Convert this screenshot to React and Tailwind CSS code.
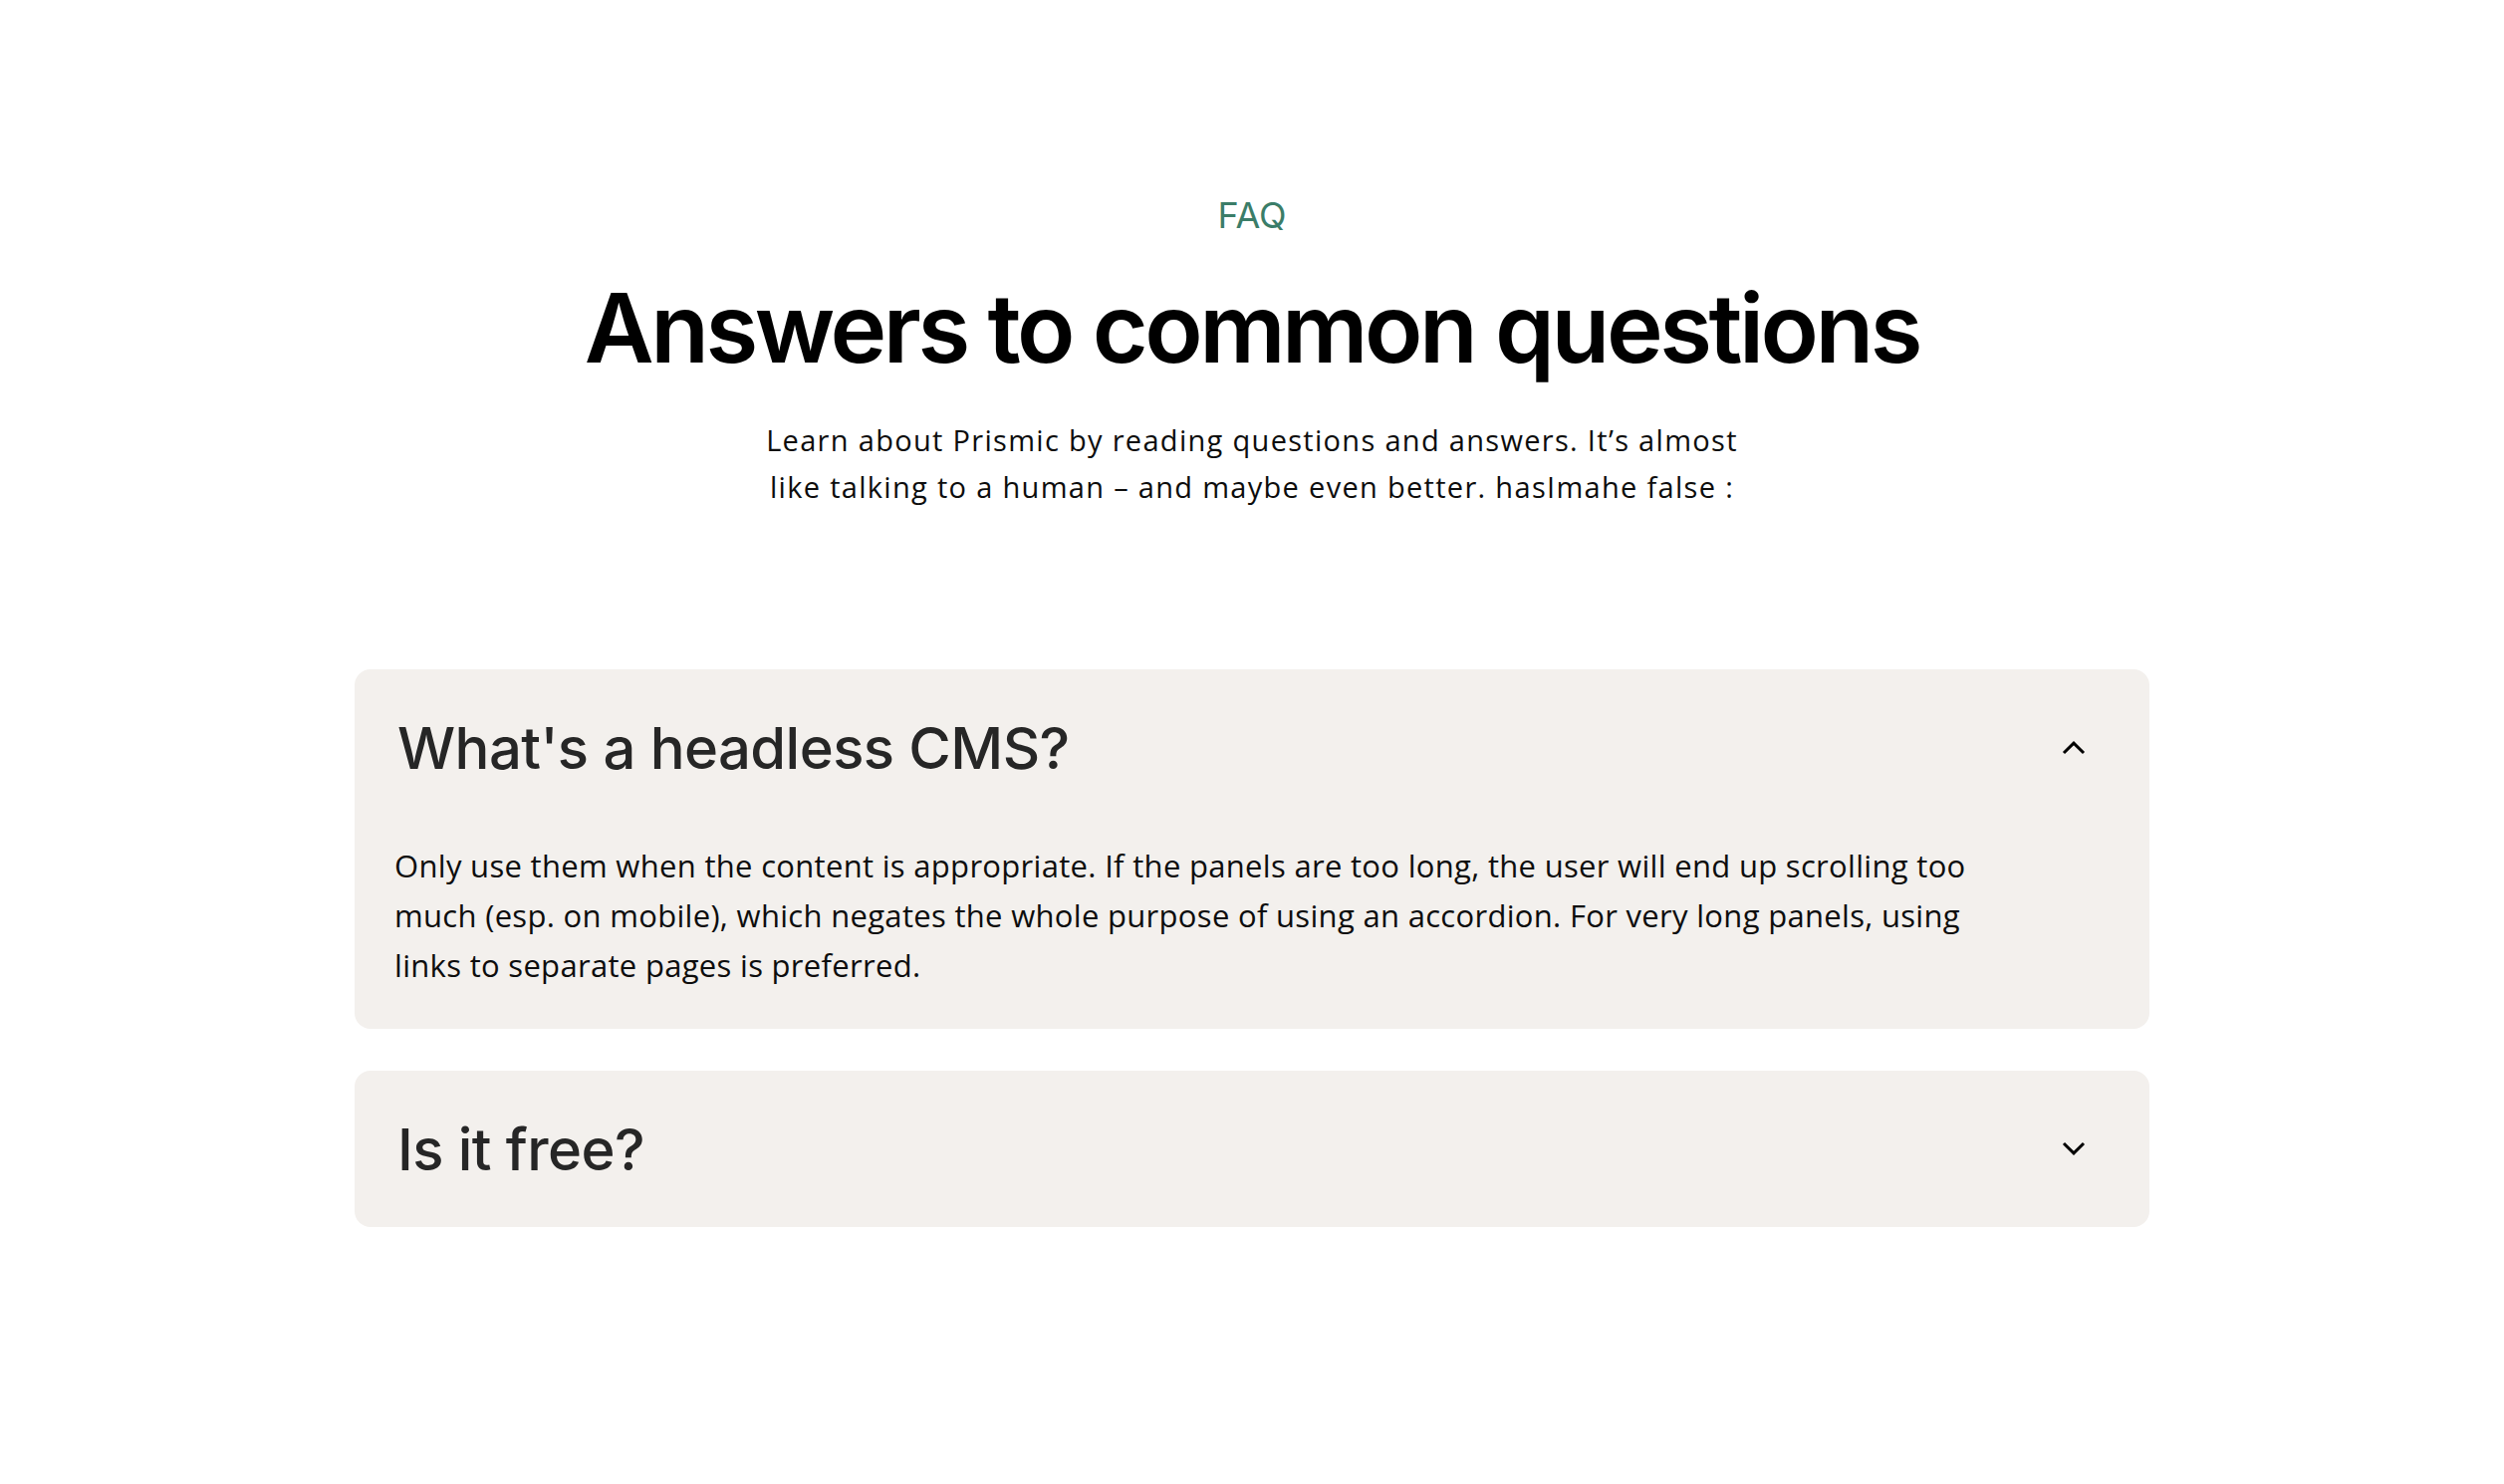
import React, { useState } from "react";

const items = [
  {
    q: "What's a headless CMS?",
    a: "Only use them when the content is appropriate. If the panels are too long, the user will end up scrolling too much (esp. on mobile), which negates the whole purpose of using an accordion. For very long panels, using links to separate pages is preferred.",
  },
  { q: "Is it free?", a: "Yes, you can get started with Prismic for free." },
];

function Chevron({ up }) {
  return (
    <svg width="24" height="15" viewBox="0 0 24 15" fill="none" stroke="#000" strokeWidth="3" strokeLinecap="butt" strokeLinejoin="miter" className={up ? "" : "rotate-180"}>
      <path d="M2 13 L12 3.2 L22 13" />
    </svg>
  );
}

export default function App() {
  const [open, setOpen] = useState(0);
  return (
    <div className="min-h-screen bg-white flex flex-col items-center pt-[194px] pb-[200px]">
      <p className="text-[36px] leading-[44px] text-[#3b7d68] font-['Inter',sans-serif]">FAQ</p>
      <h1 className="mt-[38px] text-[96px] leading-[106px] font-semibold tracking-[-0.036em] text-black font-['Inter',sans-serif]">
        Answers to common questions
      </h1>
      <p className="mt-[36px] w-[1000px] text-center text-[29px] leading-[47px] tracking-[0.045em] text-[#0d0d0d] font-['Open_Sans',sans-serif]">
        Learn about Prismic by reading questions and answers. It’s almost like talking to a human – and maybe even better. hasImahe false :
      </p>
      <div className="mt-[160px] w-[1802px] flex flex-col gap-[42px]">
        {items.map((it, i) => (
          <div key={i} className="bg-[#f3f0ed] rounded-[16px]">
            <button
              onClick={() => setOpen(open === i ? -1 : i)}
              className="w-full h-[157px] flex items-center justify-between pl-[43px] pr-[64px] text-left"
            >
              <span className="text-[58px] leading-[70px] font-medium tracking-[-0.01em] text-[#262626] font-['Inter',sans-serif]">{it.q}</span>
              <Chevron up={open === i} />
            </button>
            {open === i && (
              <div className="pl-[40px] pt-[15px] pb-[39px]">
                <p className="max-w-[1620px] text-[31px] leading-[50px] tracking-[0.01em] text-[#0d0d0d] font-['Open_Sans',sans-serif]">{it.a}</p>
              </div>
            )}
          </div>
        ))}
      </div>
    </div>
  );
}
